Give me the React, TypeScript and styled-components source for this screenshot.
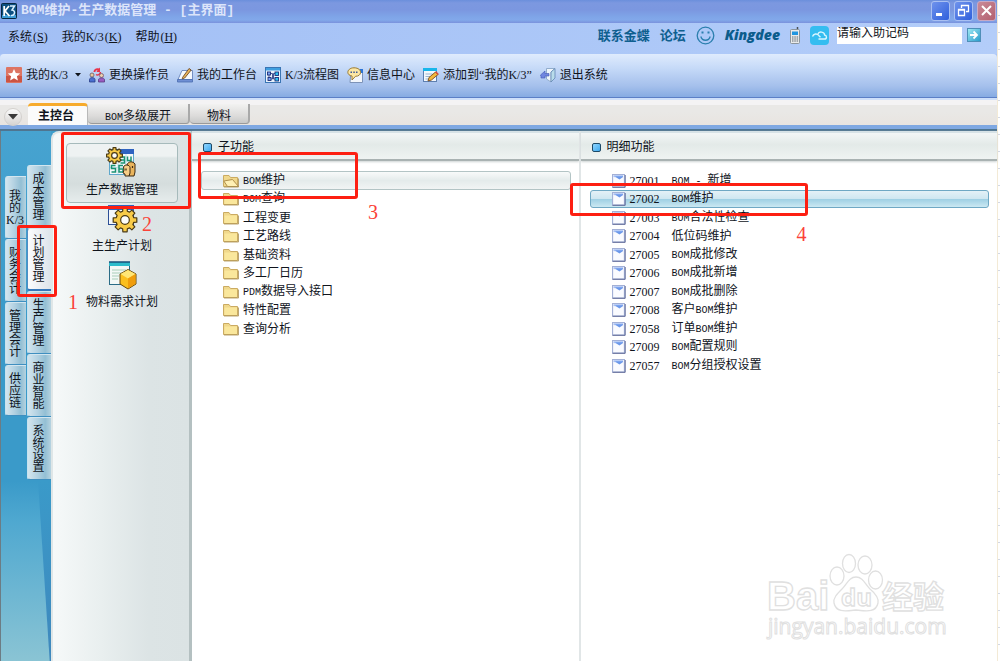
import React from 'react';
import styled, { createGlobalStyle, css } from 'styled-components';

const Global = createGlobalStyle`
  *, *::before, *::after { box-sizing: border-box; }
  html, body { margin: 0; padding: 0; }
  body, button, input {
    font-family: "Liberation Serif", "Noto Sans CJK SC", serif;
    font-size: 12px;
    line-height: 16px;
    color: #10141c;
  }
  button { margin: 0; padding: 0; border: 0; background: none; white-space: nowrap; }
  ul { margin: 0; padding: 0; list-style: none; }
  svg { display: block; flex: none; }
`;

const Page = styled.div`
  display: grid;
  grid-template-columns: minmax(0, 1fr) 3px;
  min-height: 100vh;
  background: #fff;
`;

const AppWindow = styled.div`
  display: flex;
  flex-direction: column;
  background: #aac5f7;
`;

const SheetEdge = styled.div`
  border-left: 1px solid #f3ead6;
  background: repeating-linear-gradient(#fff 0 15px, #d3d8e4 15px 16px, #fff 16px 17px);
`;

const Caps = styled.span`
  font-family: "Liberation Mono", monospace;
  font-size: 10px;
`;

/* ---------- title bar ---------- */

const TitleBar = styled.header`
  display: flex;
  align-items: center;
  gap: 4px;
  height: 23px;
  padding: 0 1px 2px 1px;
  background: linear-gradient(#6b8fdc 0, #7c98e0 3px, #7b97e0 10px, #7fa5e8 17px, #82a8ea 20px, #7a92dc 23px);
`;

const Title = styled.h1`
  flex: 1;
  margin: 0;
  font-family: "Liberation Mono", "Noto Sans CJK SC", monospace;
  font-size: 13px;
  line-height: 20px;
  font-weight: 700;
  color: #dce5fa;
`;

const WindowButton = styled.button<{ $close?: boolean }>`
  display: grid;
  place-items: center;
  width: 19px;
  height: 20px;
  border: 1px solid ${p => (p.$close ? '#c8a9c4' : '#a9c0f2')};
  border-radius: 3px;
  background: ${p => (p.$close ? 'linear-gradient(135deg,#c98a98,#b3606f)' : 'linear-gradient(135deg,#6f93ec,#2f5fdc)')};
`;

/* ---------- menu bar ---------- */

const MenuBar = styled.div`
  display: flex;
  align-items: center;
  gap: 14px;
  height: 31px;
  padding: 0 16px 3px 8px;
  background: linear-gradient(90deg, #a2bff5, #b3cdf9);
`;

const MenuKey = styled.span`
  padding-left: 1px;
`;

const Contact = styled.div`
  display: flex;
  align-items: center;
  gap: 10px;
  margin-left: auto;
  margin-top: -4px;
`;

const ContactLink = styled.a`
  font-family: "Noto Sans CJK SC", sans-serif;
  font-size: 13px;
  line-height: 18px;
  font-weight: 700;
  color: #0f5f8f;
  text-decoration: none;
`;

const Brand = styled.a`
  font-family: "Open Sans", sans-serif;
  font-size: 14px;
  line-height: 18px;
  font-weight: 800;
  font-style: italic;
  color: #0b5c8c;
  text-decoration: none;
`;

const CodeInput = styled.input`
  width: 125px;
  height: 17px;
  margin-left: -2px;
  padding: 0 0 4px 0;
  border: 0;
  background: #fff;
  &::placeholder { color: #10141c; opacity: 1; }
`;

const GoButton = styled.button`
  display: grid;
  place-items: center;
  width: 14px;
  height: 14px;
  margin: 0 0 1px -5px;
  border: 1px solid #4f8fb8;
  background: linear-gradient(135deg, #9fe9f3, #2a9ccc);
`;

/* ---------- toolbar ---------- */

const Toolbar = styled.nav`
  display: flex;
  align-items: center;
  gap: 8px;
  height: 44px;
  padding: 0 6px 2px;
  border-bottom: 1px solid #5b7fc6;
  border-radius: 4px 4px 0 0;
  background: linear-gradient(#dfebfd 0, #c6daf8 14px, #a5c0ec 32px, #86abe2 43px);
`;

const ToolButton = styled.button`
  display: flex;
  align-items: center;
  gap: 4px;
`;

/* ---------- document tabs ---------- */

const TabBar = styled.div`
  display: flex;
  align-items: flex-start;
  height: 33px;
  padding: 4px 4px 0 4px;
  border-top: 2px solid #cfe0fa;
  border-bottom: 2px solid #4f7590;
  background:
    linear-gradient(#f4f3f4 0 5px, #e9e8e6 5px 12px, #e8e4e0 25px, #7fa8e2 25px 29px);
`;

const TabMenu = styled.button`
  display: grid;
  place-items: center;
  width: 18px;
  height: 18px;
  margin: 4px 6px 0 0;
  border: 1px solid #d3d0cd;
  border-radius: 50%;
  background: linear-gradient(#fbfbfb, #d6d4d2);
`;

const Tab = styled.button<{ $active?: boolean; $width: number }>`
  width: ${p => p.$width}px;
  height: 20px;
  line-height: 20px;
  border-right: 2px solid #a9a9a9;
  border-bottom: 1px solid #9a9a9a;
  border-radius: 0 0 4px 4px;
  background: linear-gradient(#f2f2f1, #dddcdb 60%, #c9c9c8);
  padding-top: 2px;
  ${p => p.$active && css`
    height: 22px;
    margin-top: -1px;
    border-top: 3px solid #f7ab2c;
    border-right: 1px solid #b9b9b9;
    border-bottom: 0;
    border-radius: 4px 4px 0 0;
    background: #fbfbfb;
    font-weight: 700;
    padding: 0 3px 0 0;
  `}
`;

/* ---------- body ---------- */

const Body = styled.main`
  flex: 1;
  display: flex;
  border-left: 1px solid #6c7c84;
  background: #3e9dcb;
`;

const Rail = styled.div`
  position: relative;
  display: flex;
  align-items: flex-start;
  gap: 1px;
  width: 50px;
  padding-left: 4px;
  background: linear-gradient(#47a3d0, #3a9ac9 200px, #3a9ac9 350px, #4fa8d0 390px, #8ac4d4 530px);
  &::after {
    content: "";
    position: absolute;
    inset: 350px 0 0 37px;
    background: linear-gradient(#3a9ac9, #3f88bd);
    clip-path: polygon(0 0, 100% 0, 100% 100%, 90% 100%);
  }
`;

const RailColumn = styled.div<{ $top: number; $width: number }>`
  display: flex;
  flex-direction: column;
  width: ${p => p.$width}px;
  padding-top: ${p => p.$top}px;
`;

const RailTab = styled.button<{ $active?: boolean; $short?: boolean }>`
  display: flex;
  flex-direction: column;
  align-items: center;
  justify-content: center;
  height: ${p => (p.$short ? 51 : 63)}px;
  padding-right: 2px;
  line-height: 12px;
  border-bottom: 1px solid #3f8fc0;
  border-left: 1px solid #c6e2ef;
  border-top: 1px solid #d3e6ef;
  border-radius: 3px 0 0 3px;
  background: linear-gradient(90deg, #d3e5ee, #b4d2e2 40%, #93bfd4 75%, #b6d3e0);
  ${p => p.$active && css`
    background: linear-gradient(90deg, #fbfcfd, #eceff3 50%, #dde4ea);
    border-bottom: 2px solid #3577bb;
    border-left-color: #4f8cc4;
  `}
`;

const Modules = styled.section`
  position: relative;
  display: flex;
  flex-direction: column;
  align-items: stretch;
  width: 141px;
  padding: 10px 11px 0 13px;
  border-left: 2px solid #dfe6e7;
  border-top: 2px solid #dfe6e7;
  border-right: 3px solid #b4c0c1;
  border-radius: 8px 0 0 0;
  background: linear-gradient(90deg, #f6f9f9, #e9efef 35%, #dce4e5 70%, #dbe3e4);
`;

const ModuleButton = styled.button<{ $active?: boolean }>`
  display: flex;
  flex-direction: column;
  align-items: center;
  gap: 3px;
  height: 60px;
  margin-bottom: -4px;
  padding-top: 3px;
  border: 1px solid transparent;
  border-radius: 4px;
  ${p => p.$active && css`
    border-color: #a6babb;
    background: linear-gradient(#eef2f2 0 12px, #dee6e6 14px, #d5dddd 40px, #e6ecec);
  `}
`;

const Panel = styled.section<{ $grow: number }>`
  position: relative;
  flex: ${p => p.$grow} 1 0;
  min-width: 0;
  background: #fff;
  & + & { border-left: 2px solid #e1e6e7; }
`;

const PanelHeader = styled.h2`
  display: flex;
  align-items: center;
  gap: 6px;
  height: 30px;
  margin: 0;
  padding-left: 11px;
  padding-top: 2px;
  font-size: 12px;
  line-height: 16px;
  font-weight: 400;
  border-top: 2px solid #d7e2e6;
  border-bottom: 2px solid #a9b2b2;
  background: linear-gradient(#f3f6f6, #e3eae8 45%, #eff3f2);
  box-shadow: 0 1px 2px #cdd3d3;
`;

const Bullet = styled.span`
  width: 9px;
  height: 9px;
  border: 1px solid #1d4a68;
  border-radius: 2px;
  background: linear-gradient(135deg, #8fd6ff, #3fa9ee);
`;

const List = styled.ul`
  padding: 10px 8px 0 9px;
`;

const Item = styled.li`
  height: 18px;
  &:nth-child(odd) { height: 19px; }
`;

const Row = styled.button<{ $tone?: 'gray' | 'blue' }>`
  display: flex;
  align-items: center;
  gap: 4px;
  width: 100%;
  height: 100%;
  padding-left: 21px;
  border: 1px solid transparent;
  border-radius: 3px;
  ${p => p.$tone === 'gray' && css`
    border-color: #b3c4c5;
    background: linear-gradient(#f8fafa, #e4ebeb 50%, #f1f4f4);
  `}
  ${p => p.$tone === 'blue' && css`
    border-color: #6fa8c4;
    background: linear-gradient(#e4f1f7, #cfe7f1 48%, #9fd0e4 52%, #cbe8f2);
  `}
`;

const Code = styled.span`
  width: 38px;
  text-align: left;
`;

/* ---------- annotations ---------- */

const Frame = styled.div<{ $x: number; $y: number; $w: number; $h: number }>`
  position: absolute;
  z-index: 2;
  left: ${p => p.$x}px;
  top: ${p => p.$y}px;
  width: ${p => p.$w}px;
  height: ${p => p.$h}px;
  border: 3px solid #fd1f12;
  border-radius: 3px;
  pointer-events: none;
`;

const Step = styled.span<{ $x: number; $y: number }>`
  position: absolute;
  z-index: 2;
  left: ${p => p.$x}px;
  top: ${p => p.$y}px;
  font-size: 20px;
  line-height: 20px;
  color: #fb4238;
`;

const Watermark = styled.div`
  position: absolute;
  right: 48px;
  bottom: 17px;
`;

/* ---------- icons ---------- */

const KLogo = () => (
  <svg width="16" height="16" viewBox="0 0 16 16">
    <rect x="0.5" y="0.5" width="15" height="15" rx="1" fill="#0c4f80" stroke="#06263f" />
    <path d="M1 12h14v3H1z" fill="#3b9bd4" />
    <path d="M3.2 3v10M8 3 4 8l4.5 5" stroke="#fff" strokeWidth="1.8" fill="none" />
    <path d="M9 3h4.5L11 7c4 .5 3 6-1 5.5" stroke="#d9efff" strokeWidth="1.5" fill="none" />
  </svg>
);

const StarIcon = () => (
  <svg width="16" height="16" viewBox="0 0 16 16">
    <rect width="16" height="16" rx="1" fill="#dd7462" />
    <path d="M0 9h16v6H0z" fill="#cc5443" />
    <path d="M8 2l1.8 4 4.4.4-3.3 2.9 1 4.3L8 11.3l-3.9 2.3 1-4.3L1.8 6.4 6.2 6z" fill="#fff" />
  </svg>
);

const UsersIcon = () => (
  <svg width="16" height="16" viewBox="0 0 16 16">
    <path d="M4.5 5C4.5 1.500 8 .5 10 1.500L11 .5v4.500H7.500L8.500 3.500C7 3 6.500 4 6.500 5z" fill="#e8344a" />
    <path d="M11.500 5c0 2.500-3 3.500-4.500 2.500" fill="none" stroke="#e8344a" strokeWidth="1.5" />
    <circle cx="3" cy="8" r="2" fill="#e8c9a0" stroke="#6a5a66" strokeWidth="0.8" />
    <path d="M.5 15v-2.500C.5 10 6 10 6 12.500V15z" fill="#4a6fd0" stroke="#273c86" strokeWidth="0.8" />
    <circle cx="12.5" cy="8.5" r="2" fill="#ead0b0" stroke="#7a5668" strokeWidth="0.8" />
    <path d="M9.500 15v-2.300c0-2.400 6-2.400 6 0V15z" fill="#9a5cc0" stroke="#5a3a80" strokeWidth="0.8" />
  </svg>
);

const DeskIcon = () => (
  <svg width="16" height="16" viewBox="0 0 16 16">
    <path d="M5 3.500h10.500v9H1z" fill="#f4f8fd" stroke="#5b78b4" strokeWidth="0.8" />
    <path d="M.5 12.500h15v2.500H.5z" fill="#6f8fd4" stroke="#4a6cae" strokeWidth="0.8" />
    <path d="M5.500 10.500 12 1.500l2.200 1.500-6.500 8-2.500.8z" fill="#e8b45a" stroke="#6e4a26" strokeWidth="0.9" />
  </svg>
);

const FlowIcon = () => (
  <svg width="16" height="16" viewBox="0 0 16 16">
    <rect x="0.5" y="0.5" width="15" height="15" fill="#e9f2fc" stroke="#3a75b4" />
    <path d="M1 1h14v2.500H1z" fill="#3f9fe0" />
    <path d="M5 6.500h2.500v5.500H6M10 6.500H8.500v5.500H10M4 8v3" stroke="#1c2d78" strokeWidth="0.8" fill="none" />
    <rect x="2.500" y="5" width="3" height="3" fill="#7aa2f4" stroke="#1c2d78" strokeWidth="0.9" />
    <rect x="3" y="10.500" width="3" height="3" fill="#7aa2f4" stroke="#1c2d78" strokeWidth="0.9" />
    <rect x="10" y="5" width="3.500" height="3.500" fill="#2fc3f0" stroke="#1c2d78" strokeWidth="0.9" />
    <rect x="10" y="10.500" width="3.500" height="3.500" fill="#2fc3f0" stroke="#1c2d78" strokeWidth="0.9" />
  </svg>
);

const MessageIcon = () => (
  <svg width="16" height="16" viewBox="0 0 16 16">
    <path d="M4 3h11.500v12.500H3z" fill="#f2f6fc" stroke="#7d93b8" />
    <path d="M12.500 2h3.500v4h-2z" fill="#2b74d6" />
    <path d="M7 .8c8.500 0 8.500 8.500 1.500 8.500L5 13V9C-1.500 8 0 .8 7 .8z" fill="#fce7a4" stroke="#9a7a32" />
    <path d="M3.500 4.500H5V6H3.500zM6.300 4.500h1.500V6H6.300zM9 4.500h1.500V6H9z" fill="#3a5a9a" />
  </svg>
);

const NoteIcon = () => (
  <svg width="16" height="16" viewBox="0 0 16 16">
    <rect x="0.5" y="1.5" width="13" height="13" fill="#f4f8fc" stroke="#5e7fb0" />
    <path d="M0 1h14v3H0z" fill="#18b6ea" />
    <path d="M2.500 7h7M2.500 9.500h5M2.500 12h3" stroke="#9db4cf" />
    <path d="m5 14 1-3.500L12.500 5l2.500 2.500L8.500 13z" fill="#f2b83c" stroke="#7c4c1e" strokeWidth="0.9" />
    <path d="m12 5.300 1.200-1L15.800 7l-1 1z" fill="#d84a3c" />
  </svg>
);

const ExitIcon = () => (
  <svg width="16" height="16" viewBox="0 0 16 16">
    <path d="M6.500 1.500h8.500L11 5v10l-4.500-3z" fill="#eef5fb" stroke="#8aa6c6" strokeWidth="0.9" />
    <path d="M15 1.500 11 5v10l4-4z" fill="#b9dcea" stroke="#6387b3" strokeWidth="0.8" />
    <path d="M.5 8 5 4v2.500h4V9H5v2H1V9.500z" fill="#6f86e0" stroke="#4459b4" strokeWidth="0.6" />
  </svg>
);

const Caret = () => (
  <svg width="9" height="4" viewBox="0 0 9 4"><path d="M3 0h6L6 3.500z" fill="#10141c" /></svg>
);

const SmileIcon = () => (
  <svg width="19" height="19" viewBox="0 0 19 19" fill="none" stroke="#2b7fae" strokeWidth="1.3">
    <circle cx="9.500" cy="9.500" r="8.300" />
    <path d="M4.800 10.500c1.500 5 8 5 9.400 0" />
    <path d="M6.500 5.500v2M12.500 5.500v2" strokeWidth="2" />
  </svg>
);

const PhoneIcon = () => (
  <svg width="10" height="17" viewBox="0 0 10 17">
    <path d="M7.500 0v3" stroke="#4a4f55" strokeWidth="1.5" />
    <rect x="0.5" y="2.5" width="9" height="14" rx="1" fill="#e9eaea" stroke="#8b959c" />
    <path d="M2 4.500h6V8H2z" fill="#2196e0" />
    <path d="M2 10h1.500M4.300 10h1.500M6.600 10h1.500M2 12h1.500M4.300 12h1.500M6.600 12h1.500M2 14h1.500M4.300 14h1.500M6.600 14h1.500" stroke="#5b666e" />
  </svg>
);

const CloudIcon = () => (
  <svg width="19" height="19" viewBox="0 0 19 19">
    <rect width="19" height="19" rx="4" fill="#35bdf0" />
    <path d="M8.500 13h6c2.600 0 2.600-3.700.2-3.900C14.500 5.500 8.800 5 8 8" fill="none" stroke="#d9f6ff" strokeWidth="1.4" />
    <path d="M2.500 10.500c1-3 4.500-3.500 6.500-.8l1.500 1.500" fill="none" stroke="#d9f6ff" strokeWidth="1.4" />
  </svg>
);

const gearPath = (cx: number, cy: number, inner: number, outer: number) => {
  const points: string[] = [];
  for (let i = 0; i < 8; i += 1) {
    const base = (i * Math.PI) / 4;
    [[-0.26, inner], [-0.18, outer], [0.18, outer], [0.26, inner]].forEach(([turn, radius]) => {
      points.push(`${(cx + radius * Math.cos(base + turn)).toFixed(2)} ${(cy + radius * Math.sin(base + turn)).toFixed(2)}`);
    });
  }
  return `M${points.join('L')}Z`;
};

const Gear = ({ cx, cy, size }: { cx: number; cy: number; size: number }) => (
  <g stroke="#4a3a14">
    <path d={gearPath(cx, cy, size * 0.76, size)} fill="#f8cb48" strokeWidth="1.2" strokeLinejoin="round" />
    <circle cx={cx} cy={cy} r={size * 0.36} fill="#fdfdfb" strokeWidth="1.2" />
  </g>
);

const DataIcon = () => (
  <svg width="32" height="32" viewBox="0 0 32 32">
    <rect x="3.5" y="3.5" width="24" height="24" fill="#f6f8fa" stroke="#5fa8cc" />
    <path d="M3 2h25v5H3z" fill="#2f63c0" />
    <path d="M4 14h23M4 20.500h23M12 7v20M20 7v20" stroke="#bfe0ea" />
    <path d="M14.500 10h4v6h-4M15 13h3M21.500 9.500v4h4M25 9.500V16M9.500 18.500h-4v3h4v3.500h-4M17 18.500h-4v6.500h4v-3h-4" fill="none" stroke="#1a9273" strokeWidth="1.5" />
    <Gear cx={8.5} cy={8.5} size={8} />
    <path d="M21 18c1-4 6-4 8-1v8l-1 4h-5z" fill="#e9b45c" stroke="#3d2a12" />
    <path d="M17.500 20c1-3 6-2.500 6.500.5V26l-1 3h-4v-2l-2-1 1-3z" fill="#f6cd86" stroke="#3d2a12" />
    <path d="M20 21.500v2M26.500 19v2" stroke="#3d2a12" strokeWidth="1.2" />
  </svg>
);

const PlanIcon = () => (
  <svg width="32" height="32" viewBox="0 0 32 32">
    <rect x="2.5" y="2.5" width="25" height="19" fill="#f4f7fa" stroke="#2c4f96" />
    <path d="M2 2h26v5H2z" fill="#2f63c0" />
    <Gear cx={19} cy={17} size={12} />
  </svg>
);

const MaterialIcon = () => (
  <svg width="32" height="32" viewBox="0 0 32 32">
    <rect x="3.5" y="3.5" width="20" height="22" fill="#f3f8f6" stroke="#2b6c86" />
    <path d="M3 3h21v4H3z" fill="#2bbccb" />
    <path d="M3 3h21" stroke="#17507a" strokeWidth="1.5" />
    <path d="M6 11h14M6 14h10M6 17h7M6 20h6" stroke="#a8cdb8" />
    <path d="m22 10.500 8 4.500v10l-8 5-8-5V15z" fill="#fbbf1e" stroke="#6a4a10" />
    <path d="m22 11 7.500 4-7.500 4.500L14.500 15z" fill="#ffe676" />
    <path d="M22 19.500 29.500 15v9.700L22 29.500z" fill="#f09d0c" />
  </svg>
);

const FolderIcon = ({ open }: { open?: boolean }) => (
  <svg width="16" height="14" viewBox="0 0 16 14">
    <path d="M.5 12.500V1.500h5.500l1.500 2h7v9z" fill="#f0d88c" stroke="#cbab62" />
    {open
      ? <path d="M.8 7 9.500 5.500l6 7H4.500z" fill="#fff0b4" stroke="#b0904c" />
      : <path d="M1.500 4.500h12.500v7.500H1.500z" fill="#fae79c" />}
    <path d="M1 13h14.500V4.500" stroke="#a98f52" fill="none" strokeWidth="0.8" />
  </svg>
);

const DocIcon = () => (
  <svg width="14" height="14" viewBox="0 0 14 14">
    <rect x="0.5" y="0.5" width="12" height="12.5" fill="#eef1fa" stroke="#a3b0d6" />
    <path d="M2 4h9v8H2z" fill="#fafbff" />
    <path d="M3.500 2H11v1L7.500 5.500 3.500 3z" fill="#6b98ea" />
    <path d="M1.500 1.500H11v1.200H1.500z" fill="#86aaf0" />
    <path d="M.5 13.300h12.700V1" stroke="#5f6a98" fill="none" />
  </svg>
);

const BaiduMark = () => (
  <svg width="184" height="94" viewBox="0 0 184 94" fill="#fff" stroke="#e0e0e0" strokeWidth="1.3">
    <text x="2" y="60" fontFamily="Liberation Sans" fontWeight="700" fontSize="40">Bai</text>
    <ellipse cx="72" cy="26" rx="7" ry="9" />
    <ellipse cx="84" cy="13.500" rx="6.500" ry="9" />
    <ellipse cx="100" cy="15" rx="7" ry="9" />
    <ellipse cx="110.500" cy="30" rx="7" ry="9" />
    <path d="M91 27c7 0 9 7 14 12 6 5 9 9 8 14-2 10-12 8-22 7-10 1-20 3-22-7-1-5 3-9 8-14 5-5 7-12 14-12z" />
    <text x="76" y="56" fontFamily="Open Sans" fontWeight="700" fontSize="24">du</text>
    <text x="117" y="58" fontFamily="Noto Sans CJK SC" fontWeight="700" fontSize="31">经验</text>
    <text x="3" y="84" fontFamily="Open Sans" fontWeight="400" fontSize="21" strokeWidth="1">jingyan.baidu.com</text>
  </svg>
);

/* ---------- data ---------- */

const withCaps = (text: string) =>
  text.split(/(BOM - |BOM|PDM)/).map((part, i) =>
    i % 2 ? <Caps key={i}>{part.replace(/ /g, '\u00a0')}</Caps> : part);

const menus: [string, string][] = [['系统', 'S'], ['我的K/3', 'K'], ['帮助', 'H']];

const tools: { label: string; icon: React.ReactNode; caret?: boolean }[] = [
  { label: '我的K/3', icon: <StarIcon />, caret: true },
  { label: '更换操作员', icon: <UsersIcon /> },
  { label: '我的工作台', icon: <DeskIcon /> },
  { label: 'K/3流程图', icon: <FlowIcon /> },
  { label: '信息中心', icon: <MessageIcon /> },
  { label: '添加到“我的K/3”', icon: <NoteIcon /> },
  { label: '退出系统', icon: <ExitIcon /> },
];

const outerTabs = [['我', '的', 'K/3'], [...'财务会计'], [...'管理会计'], [...'供应链']];
const innerTabs = ['成本管理', '计划管理', '生产管理', '商业智能', '系统设置'];

const folders = ['BOM维护', 'BOM查询', '工程变更', '工艺路线', '基础资料', '多工厂日历', 'PDM数据导入接口', '特性配置', '查询分析'];

const details: [string, string][] = [
  ['27001', 'BOM - 新增'],
  ['27002', 'BOM维护'],
  ['27003', 'BOM合法性检查'],
  ['27004', '低位码维护'],
  ['27005', 'BOM成批修改'],
  ['27006', 'BOM成批新增'],
  ['27007', 'BOM成批删除'],
  ['27008', '客户BOM维护'],
  ['27058', '订单BOM维护'],
  ['27009', 'BOM配置规则'],
  ['27057', 'BOM分组授权设置'],
];

export default function App() {
  return (
    <>
      <Global />
      <Page>
        <AppWindow>
          <TitleBar>
            <KLogo />
            <Title>BOM维护-生产数据管理 - [主界面]</Title>
            <WindowButton aria-label="最小化">
              <svg width="13" height="13"><path d="M2 9h6v3H2z" fill="#fff" /></svg>
            </WindowButton>
            <WindowButton aria-label="还原">
              <svg width="13" height="13" fill="none" stroke="#fff" strokeWidth="1.3"><path d="M4.500 4V1.500h7v6H9M1.500 5.500h6v6h-6zM1.500 6h6" /></svg>
            </WindowButton>
            <WindowButton $close aria-label="关闭">
              <svg width="13" height="13" stroke="#fff" strokeWidth="2"><path d="m2 2 9 9M11 2l-9 9" /></svg>
            </WindowButton>
          </TitleBar>

          <MenuBar>
            {menus.map(([label, key]) => (
              <button key={key}>{label}<MenuKey>(<u>{key}</u>)</MenuKey></button>
            ))}
            <Contact>
              <ContactLink href="#contact">联系金蝶</ContactLink>
              <ContactLink href="#forum">论坛</ContactLink>
              <SmileIcon />
              <Brand href="#kingdee">Kingdee</Brand>
              <PhoneIcon />
              <CloudIcon />
              <CodeInput aria-label="助记码" placeholder="请输入助记码" />
              <GoButton aria-label="转到">
                <svg width="10" height="10" fill="none" stroke="#fff" strokeWidth="1.8"><path d="M1 5h7M4.500 1.500 8 5 4.500 8.500" /></svg>
              </GoButton>
            </Contact>
          </MenuBar>

          <Toolbar>
            {tools.map(t => (
              <ToolButton key={t.label}>
                {t.icon}
                <span>{t.label}</span>
                {t.caret && <Caret />}
              </ToolButton>
            ))}
          </Toolbar>

          <TabBar>
            <TabMenu aria-label="窗口列表">
              <svg width="10" height="6"><path d="M0 0h10L5 5.500z" fill="#3a3a3a" /></svg>
            </TabMenu>
            <Tab $active $width={60}>主控台</Tab>
            <Tab $width={102}>{withCaps('BOM多级展开')}</Tab>
            <Tab $width={60}>物料</Tab>
          </TabBar>

          <Body>
            <Rail>
              <RailColumn $top={45} $width={21}>
                {outerTabs.map((chars, i) => (
                  <RailTab key={i} $short={chars.length === 3 && i > 0}>
                    {chars.map((c, j) => <span key={j}>{c}</span>)}
                  </RailTab>
                ))}
              </RailColumn>
              <RailColumn $top={34} $width={24}>
                {innerTabs.map((name, i) => (
                  <RailTab key={name} $active={i === 1}>
                    {[...name].map((c, j) => <span key={j}>{c}</span>)}
                  </RailTab>
                ))}
              </RailColumn>
              <Frame $x={16} $y={94} $w={40} $h={72} />
            </Rail>

            <Modules>
              <ModuleButton $active><DataIcon />生产数据管理</ModuleButton>
              <ModuleButton><PlanIcon />主生产计划</ModuleButton>
              <ModuleButton><MaterialIcon />物料需求计划</ModuleButton>
              <Frame $x={8} $y={-1} $w={130} $h={77} />
              <Step $x={15} $y={159}>1</Step>
              <Step $x={89} $y={81}>2</Step>
            </Modules>

            <Panel $grow={387}>
              <PanelHeader><Bullet />子功能</PanelHeader>
              <List>
                {folders.map((name, i) => (
                  <Item key={name}>
                    <Row $tone={i === 0 ? 'gray' : undefined}>
                      <FolderIcon open={i === 0} />
                      <span>{withCaps(name)}</span>
                    </Row>
                  </Item>
                ))}
              </List>
              <Frame $x={6} $y={21} $w={160} $h={47} />
              <Step $x={176} $y={71}>3</Step>
            </Panel>

            <Panel $grow={417}>
              <PanelHeader><Bullet />明细功能</PanelHeader>
              <List>
                {details.map(([code, name], i) => (
                  <Item key={code}>
                    <Row $tone={i === 1 ? 'blue' : undefined}>
                      <DocIcon />
                      <Code>{code}</Code>
                      <span>{withCaps(name)}</span>
                    </Row>
                  </Item>
                ))}
              </List>
              <Frame $x={-11} $y={52} $w={238} $h={33} />
              <Step $x={216} $y={93}>4</Step>
              <Watermark><BaiduMark /></Watermark>
            </Panel>
          </Body>
        </AppWindow>
        <SheetEdge />
      </Page>
    </>
  );
}
